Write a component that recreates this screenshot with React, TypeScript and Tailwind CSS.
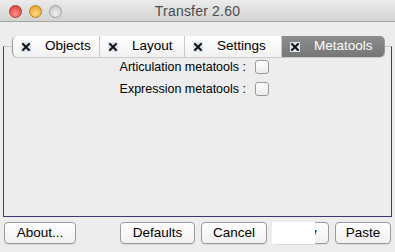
const tabs = ["Objects", "Layout", "Settings", "Metatools"];
const tabWidths: Record<string, number> = { Objects: 88, Layout: 85, Settings: 97, Metatools: 103 };

function XBox() {
  return (
    <span className="w-[10px] h-[10px] flex items-center justify-center bg-[#d9e3f1]">
      <svg width="8" height="8" viewBox="0 0 8 8">
        <path d="M1 1L7 7M7 1L1 7" stroke="#111" strokeWidth="2" strokeLinecap="square" />
      </svg>
    </span>
  );
}

function Tab({ label, active, first, last }: { label: string; active: boolean; first: boolean; last: boolean }) {
  return (
    <div
      className={`flex items-center h-full pl-[8px] border-[#9a9a9a] ${first ? "rounded-l-[5px] border-l" : ""} ${
        last ? "rounded-r-[5px] border-r" : "border-r border-r-[#c8c8c8]"
      } ${active ? "bg-gradient-to-b from-[#8d8d8d] to-[#767676] text-white" : "bg-gradient-to-b from-white to-[#f1f1f1] text-black"}`}
      style={{ width: tabWidths[label] }}
    >
      <XBox />
      <span className="ml-[14px]">{label}</span>
    </div>
  );
}

function Btn({ children, w }: { children: React.ReactNode; w: number }) {
  return (
    <div
      className="h-[22px] rounded-[4px] border border-[#9b9b9b] bg-gradient-to-b from-white to-[#f0f0f0] flex items-center justify-center text-[13.5px] text-black shadow-[0_1px_0_rgba(0,0,0,0.08)]"
      style={{ width: w }}
    >
      {children}
    </div>
  );
}

function Check() {
  return <span className="w-[14px] h-[14px] rounded-[3px] border border-[#9a9a9a] bg-gradient-to-b from-white to-[#ececec]" />;
}

export default function App() {
  return (
    <div className="w-[395px] h-[252px] bg-[#ededed] overflow-hidden flex flex-col" style={{ fontFamily: '"Liberation Sans", Arial, sans-serif' }}>
      {/* Title bar */}
      <div className="relative h-[22px] shrink-0 bg-gradient-to-b from-[#ebebeb] to-[#d3d3d3] border-b border-[#a6a6a6] flex items-center">
        <div className="flex items-center gap-[7px] pl-[9px] pt-[1px]">
          <span className="w-[13px] h-[13px] rounded-full bg-[radial-gradient(circle_at_50%_70%,#ff8f8a,#d6342c)] border border-[#b03a33]" />
          <span className="w-[13px] h-[13px] rounded-full bg-[radial-gradient(circle_at_50%_70%,#ffd884,#e29a1a)] border border-[#b9831f]" />
          <span className="w-[13px] h-[13px] rounded-full bg-[radial-gradient(circle_at_50%_70%,#f2f2f2,#bdbdbd)] border border-[#a2a2a2]" />
        </div>
        <div className="absolute inset-0 flex items-center justify-center pt-[1px] text-[14px] text-[#4c4c4c] tracking-[0.2px]">Transfer 2.60</div>
      </div>

      {/* Tabs + panel */}
      <div className="relative mt-[14px] mx-[3px] h-[181px]">
        <div className="absolute left-0 right-0 top-[10px] bottom-0 border border-[#3d3977] border-t-[#c9c9c9]" />
        <div className="relative flex h-[21px] ml-[9px] text-[13.5px] shadow-[0_1px_1px_rgba(0,0,0,0.15)] rounded-[5px] w-fit">
          {tabs.map((t, i) => (
            <Tab key={t} label={t} active={t === "Metatools"} first={i === 0} last={i === tabs.length - 1} />
          ))}
        </div>
        <div className="relative flex flex-col items-end w-[266px] mt-[3px] gap-[8px] text-[12.5px] text-black">
          <div className="flex items-center gap-[9px] h-[14px]">
            <span>Articulation metatools :</span>
            <Check />
          </div>
          <div className="flex items-center gap-[9px] h-[14px]">
            <span>Expression metatools :</span>
            <Check />
          </div>
        </div>
      </div>

      {/* Buttons */}
      <div className="relative flex items-center mt-[5px] px-[4px]">
        <Btn w={72}>About...</Btn>
        <div className="ml-[44px] flex gap-[6px]">
          <Btn w={75}>Defaults</Btn>
          <Btn w={66}>Cancel</Btn>
          <Btn w={56}>Copy</Btn>
          <Btn w={56}>Paste</Btn>
        </div>
        <div className="absolute left-[272px] top-0 w-[43px] h-[22px] bg-white" />
      </div>
    </div>
  );
}
